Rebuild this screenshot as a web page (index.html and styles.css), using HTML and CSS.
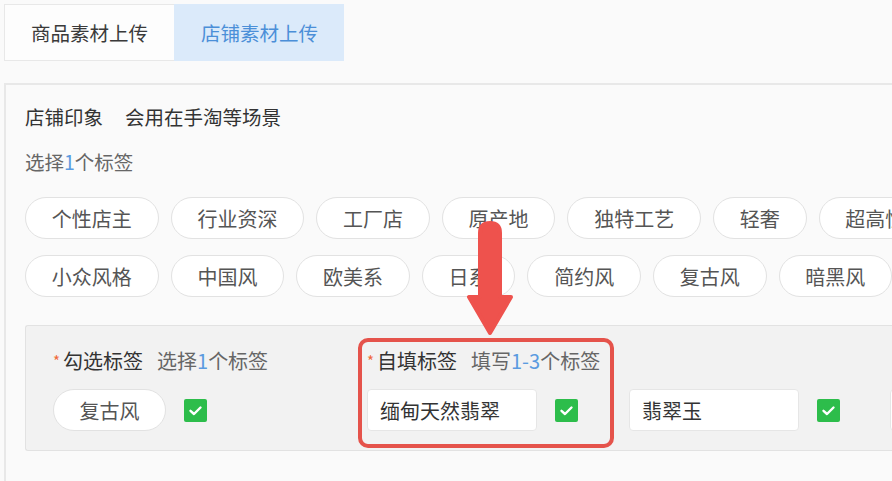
FILE: index.html
```html
<!DOCTYPE html>
<html lang="zh-CN">
<head>
<meta charset="utf-8">
<title>店铺素材上传</title>
<link rel="stylesheet" href="styles.css">
</head>
<body>
<div class="tabs">
  <div class="tab">商品素材上传</div>
  <div class="tab tab-active">店铺素材上传</div>
</div>
<div class="panel">
  <div class="title">店铺印象<span class="title-sub">会用在手淘等场景</span></div>
  <div class="hint">选择<span class="num">1</span>个标签</div>
  <div class="tag-rows">
    <div class="tag-row">
      <span class="pill">个性店主</span>
      <span class="pill">行业资深</span>
      <span class="pill">工厂店</span>
      <span class="pill">原产地</span>
      <span class="pill">独特工艺</span>
      <span class="pill">轻奢</span>
      <span class="pill">超高性价比</span>
    </div>
    <div class="tag-row">
      <span class="pill">小众风格</span>
      <span class="pill">中国风</span>
      <span class="pill">欧美系</span>
      <span class="pill">日系</span>
      <span class="pill">简约风</span>
      <span class="pill">复古风</span>
      <span class="pill">暗黑风</span>
    </div>
  </div>
  <div class="fields">
    <div class="label"><span class="req">*</span>勾选标签<span class="label-sub">选择<span class="num">1</span>个标签</span></div>
    <div class="label"><span class="req">*</span>自填标签<span class="label-sub">填写<span class="num">1-3</span>个标签</span></div>
    <div class="label"></div>
    <div class="label"></div>
    <div class="ctrl">
      <span class="pill">复古风</span>
      <span class="check"><svg viewBox="0 0 23 23" width="23" height="23"><path d="M6.5 11.8 L10 15 L16.5 8.5" fill="none" stroke="#fff" stroke-width="2.4" stroke-linecap="round" stroke-linejoin="round"/></svg></span>
    </div>
    <div class="ctrl">
      <span class="input">缅甸天然翡翠</span>
      <span class="check"><svg viewBox="0 0 23 23" width="23" height="23"><path d="M6.5 11.8 L10 15 L16.5 8.5" fill="none" stroke="#fff" stroke-width="2.4" stroke-linecap="round" stroke-linejoin="round"/></svg></span>
    </div>
    <div class="ctrl">
      <span class="input">翡翠玉</span>
      <span class="check"><svg viewBox="0 0 23 23" width="23" height="23"><path d="M6.5 11.8 L10 15 L16.5 8.5" fill="none" stroke="#fff" stroke-width="2.4" stroke-linecap="round" stroke-linejoin="round"/></svg></span>
    </div>
    <div class="ctrl">
      <span class="input"></span>
    </div>
  </div>
</div>
<div class="mark-box"></div>
<svg class="mark-arrow" viewBox="0 0 60 120" width="60" height="120">
  <path d="M20 13 Q20 3 30 3 Q40 3 40 13 L40 77 L51 77 L30 113 L9 77 L20 77 Z" fill="#ee524d" stroke="#ee524d" stroke-width="4" stroke-linejoin="round"/>
</svg>
</body>
</html>
```
FILE: styles.css
```css
html, body {
  margin: 0;
  padding: 0;
}
body {
  width: 892px;
  height: 481px;
  overflow: hidden;
  background: #fafafa;
  font-family: "Noto Sans CJK SC", "Microsoft YaHei", sans-serif;
  color: #333;
  font-size: 20px;
  position: relative;
}
.tabs {
  display: flex;
  margin: 4px 0 0 4px;
  height: 57px;
}
.tab {
  width: 170px;
  display: flex;
  align-items: center;
  justify-content: center;
  background: #fdfdfd;
  border: 1px solid #e8e8e8;
  border-right: none;
  box-sizing: border-box;
  color: #3a3a3a;
  font-size: 19.5px;
}
.tab-active {
  background: #dbeafa;
  border-color: #dbeafa;
  color: #4b8fd8;
}
.panel {
  margin: 22px 0 0 4px;
  border-top: 2px solid #e8e8e8;
  border-left: 2px solid #e8e8e8;
  padding: 20px 0 0 19px;
  height: 400px;
  box-sizing: border-box;
}
.title {
  line-height: 24px;
  font-size: 19.5px;
  color: #333;
  white-space: nowrap;
}
.title-sub {
  margin-left: 22px;
}
.hint {
  margin-top: 21px;
  line-height: 24px;
  font-size: 19.5px;
  color: #666;
}
.num {
  color: #5b9be0;
}
.tag-rows {
  margin-top: 23px;
  display: flex;
  flex-direction: column;
  gap: 16px;
}
.tag-row {
  display: flex;
  gap: 12px;
  white-space: nowrap;
}
.pill {
  display: inline-flex;
  align-items: center;
  justify-content: center;
  height: 42px;
  padding: 0 25.8px;
  box-sizing: border-box;
  border: 1px solid #e2e2e2;
  border-radius: 21px;
  background: #fff;
  color: #555;
  font-size: 20px;
  white-space: nowrap;
  flex: none;
}
.fields {
  margin-top: 28px;
  height: 126px;
  box-sizing: border-box;
  background: #f2f2f2;
  border: 1px solid #e2e2e2;
  border-right: none;
  border-radius: 3px 0 0 3px;
  padding: 23px 0 0 27px;
  display: grid;
  grid-template-columns: 314px 262px 261px 261px;
  grid-template-rows: 24px 42px;
  row-gap: 16px;
  overflow: hidden;
}
.label {
  line-height: 24px;
  font-size: 20px;
  color: #333;
  white-space: nowrap;
}
.req {
  color: #f06a3a;
  font-size: 15px;
  margin-right: 3px;
  vertical-align: 2px;
}
.label-sub {
  margin-left: 14px;
  color: #666;
}
.ctrl {
  display: flex;
  align-items: center;
  gap: 18px;
}
.ctrl .pill {
  width: 113px;
  padding: 0;
}
.input {
  width: 170px;
  height: 42px;
  box-sizing: border-box;
  display: flex;
  align-items: center;
  padding-left: 12px;
  background: #fff;
  border: 1px solid #e6e6e6;
  border-radius: 4px;
  font-size: 20px;
  color: #333;
  flex: none;
}
.check {
  width: 23px;
  height: 23px;
  background: #2dbd4b;
  border-radius: 2px;
  display: block;
  flex: none;
}
.check svg {
  display: block;
}
.mark-box {
  position: absolute;
  left: 358px;
  top: 338px;
  width: 256px;
  height: 110px;
  box-sizing: border-box;
  border: 4px solid #e5534b;
  border-radius: 10px;
}
.mark-arrow {
  position: absolute;
  left: 460px;
  top: 220px;
}
```
